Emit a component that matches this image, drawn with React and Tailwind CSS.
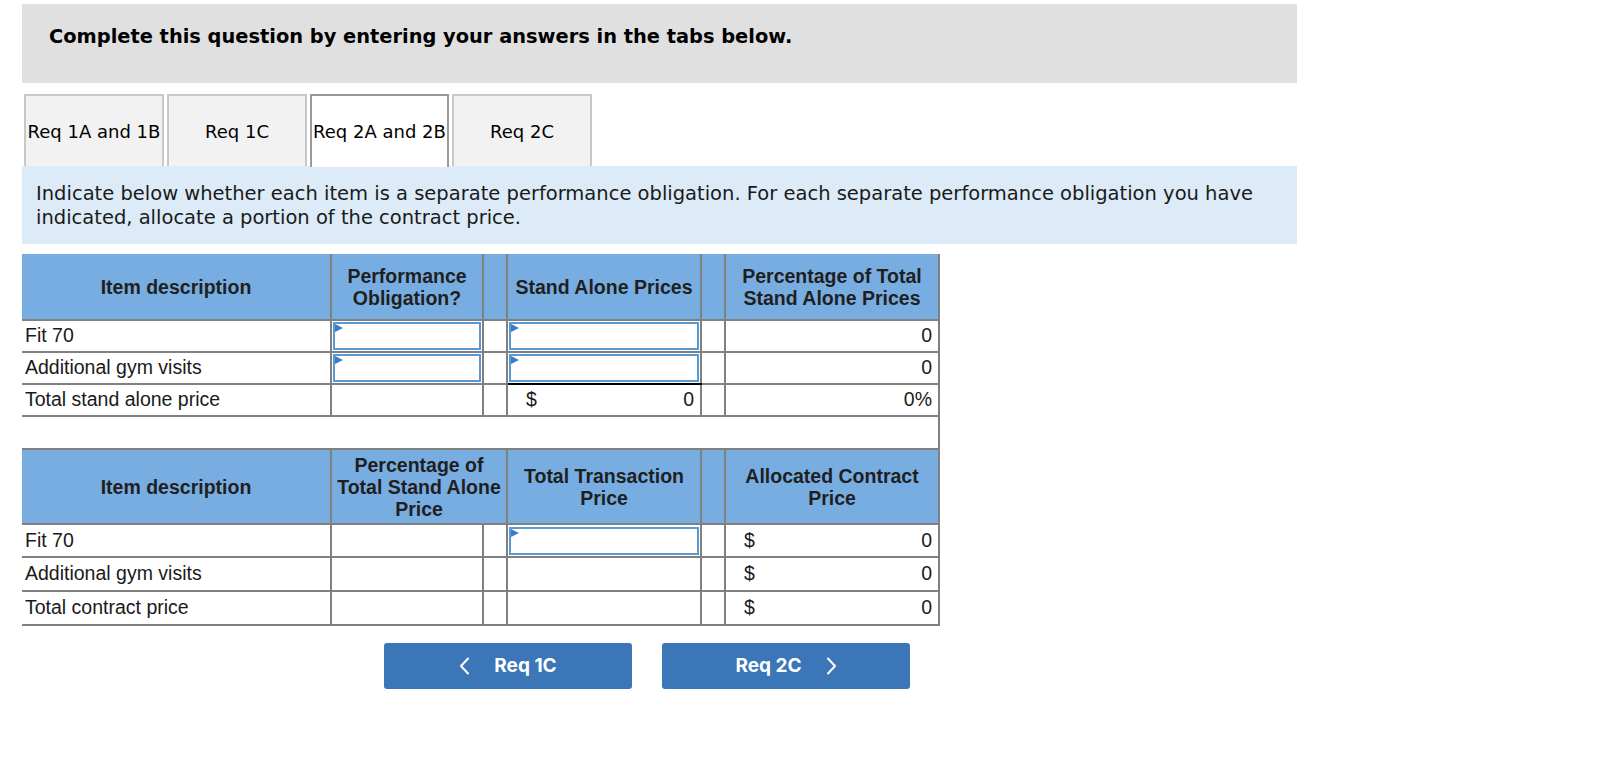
import React from 'react';

const line = 'border-2 border-[#808080]';

function Flag() {
  return <span className="absolute left-0 top-0 h-0 w-0 border-y-[4px] border-l-[8px] border-y-transparent border-l-[#3b7cc4]" />;
}

function InputCell({ className = '' }) {
  return (
    <td className={`${line} p-[1px] ${className}`}>
      <div className="relative h-[28px] border-2 border-[#5b9bd5] bg-white">
        <Flag />
      </div>
    </td>
  );
}

function Money({ value, dollar }) {
  return (
    <div className="flex items-center justify-between pl-[18px] pr-[6px]">
      <span>{dollar ? '$' : ''}</span>
      <span>{value}</span>
    </div>
  );
}

function Chevron({ dir = 'left' }) {
  return (
    <svg width="11" height="18" viewBox="0 0 11 18" fill="none" stroke="currentColor" strokeWidth="2" strokeLinecap="round" strokeLinejoin="round">
      {dir === 'left' ? <path d="M9 1.5 L2 9 L9 16.5" /> : <path d="M2 1.5 L9 9 L2 16.5" />}
    </svg>
  );
}

export default function App() {
  const tabs = [
    { label: 'Req 1A and 1B' },
    { label: 'Req 1C' },
    { label: 'Req 2A and 2B', active: true },
    { label: 'Req 2C' },
  ];

  return (
    <div className="min-h-[766px] bg-white pl-[22px] pt-[4px]">
      <div className="w-[1275px]">
        {/* Title */}
        <div className="h-[79px] bg-[#e0e0e0] pl-[27px] pt-[22px] font-['DejaVu_Sans',sans-serif] text-[19.4px] font-bold leading-[22px] text-black">
          Complete this question by entering your answers in the tabs below.
        </div>

        {/* Tabs */}
        <div className="mt-[11px] flex items-end gap-[3px] pl-[2px] font-['DejaVu_Sans',sans-serif] text-[18px] text-black">
          {tabs.map((t) =>
            t.active ? (
              <div key={t.label} className="relative z-10 -mb-[1px] flex h-[73px] w-[139px] items-center justify-center border-2 border-b-0 border-[#9a9a9a] bg-white whitespace-nowrap">
                {t.label}
              </div>
            ) : (
              <div key={t.label} className="flex h-[72px] w-[140px] items-center justify-center border-2 border-b-0 border-[#c8c8c8] bg-[#f2f2f2] whitespace-nowrap">
                {t.label}
              </div>
            )
          )}
        </div>

        {/* Instructions */}
        <div className="bg-[#dcebf7] pb-[14px] pl-[14px] pr-[14px] pt-[16px] font-['DejaVu_Sans',sans-serif] text-[19.5px] leading-[24px] text-[#1a1a1a]">
          Indicate below whether each item is a separate performance obligation. For each separate performance obligation you have indicated, allocate a portion of the contract price.
        </div>

        {/* Table */}
        <table className="mt-[10px] w-[917px] table-fixed border-collapse font-['Liberation_Sans',Arial,sans-serif] text-[19.5px] text-[#1a1a1a]">
          <colgroup>
            <col className="w-[309px]" />
            <col className="w-[152px]" />
            <col className="w-[24px]" />
            <col className="w-[194px]" />
            <col className="w-[24px]" />
            <col className="w-[214px]" />
          </colgroup>
          <thead>
            <tr className="h-[66px] bg-[#78ade2] text-[19.5px] font-bold leading-[22px] text-[#1f1f1f]">
              <th className={`${line} border-l-0 border-t-0`}>Item description</th>
              <th className={`${line} border-t-0`}>Performance<br />Obligation?</th>
              <th className={`${line} border-t-0`} />
              <th className={`${line} border-t-0`}>Stand Alone Prices</th>
              <th className={`${line} border-t-0`} />
              <th className={`${line} border-t-0`}>Percentage of Total<br />Stand Alone Prices</th>
            </tr>
          </thead>
          <tbody>
            <tr className="h-[32px]">
              <td className={`${line} border-l-0 pl-[3px]`}>Fit 70</td>
              <InputCell />
              <td className={line} />
              <InputCell />
              <td className={line} />
              <td className={`${line} pr-[6px] text-right`}>0</td>
            </tr>
            <tr className="h-[32px]">
              <td className={`${line} border-l-0 pl-[3px]`}>Additional gym visits</td>
              <InputCell />
              <td className={line} />
              <InputCell className="border-b-black" />
              <td className={line} />
              <td className={`${line} pr-[6px] text-right`}>0</td>
            </tr>
            <tr className="h-[32px]">
              <td className={`${line} border-l-0 pl-[3px]`}>Total stand alone price</td>
              <td className={line} />
              <td className={line} />
              <td className={`${line} border-t-black p-0`}><Money dollar value="0" /></td>
              <td className={line} />
              <td className={`${line} pr-[6px] text-right`}>0%</td>
            </tr>
            <tr className="h-[33px]">
              <td colSpan={6} className="border-2 border-l-0 border-[#808080]" />
            </tr>
            <tr className="h-[75px] bg-[#78ade2] text-center text-[19.5px] font-bold leading-[22px] text-[#1f1f1f]">
              <td className={`${line} border-l-0`}>Item description</td>
              <td colSpan={2} className={line}>Percentage of<br />Total Stand Alone<br />Price</td>
              <td className={line}>Total Transaction<br />Price</td>
              <td className={line} />
              <td className={line}>Allocated Contract<br />Price</td>
            </tr>
            <tr className="h-[33px]">
              <td className={`${line} border-l-0 pl-[3px]`}>Fit 70</td>
              <td className={line} />
              <td className={line} />
              <InputCell />
              <td className={line} />
              <td className={`${line} p-0`}><Money dollar value="0" /></td>
            </tr>
            <tr className="h-[34px]">
              <td className={`${line} border-l-0 pl-[3px]`}>Additional gym visits</td>
              <td className={line} />
              <td className={line} />
              <td className={line} />
              <td className={line} />
              <td className={`${line} p-0`}><Money dollar value="0" /></td>
            </tr>
            <tr className="h-[34px]">
              <td className={`${line} border-l-0 pl-[3px]`}>Total contract price</td>
              <td className={line} />
              <td className={line} />
              <td className={line} />
              <td className={line} />
              <td className={`${line} p-0`}><Money dollar value="0" /></td>
            </tr>
          </tbody>
        </table>

        {/* Navigation */}
        <div className="mt-[17px] flex gap-[30px] pl-[362px] font-['Inter',sans-serif] text-[19px] font-bold text-white">
          <button className="flex h-[46px] w-[248px] items-center justify-center gap-[24px] rounded-[3px] bg-[#3a76b8]">
            <Chevron dir="left" />
            <span>Req 1C</span>
          </button>
          <button className="flex h-[46px] w-[248px] items-center justify-center gap-[24px] rounded-[3px] bg-[#3a76b8]">
            <span>Req 2C</span>
            <Chevron dir="right" />
          </button>
        </div>
      </div>
    </div>
  );
}
